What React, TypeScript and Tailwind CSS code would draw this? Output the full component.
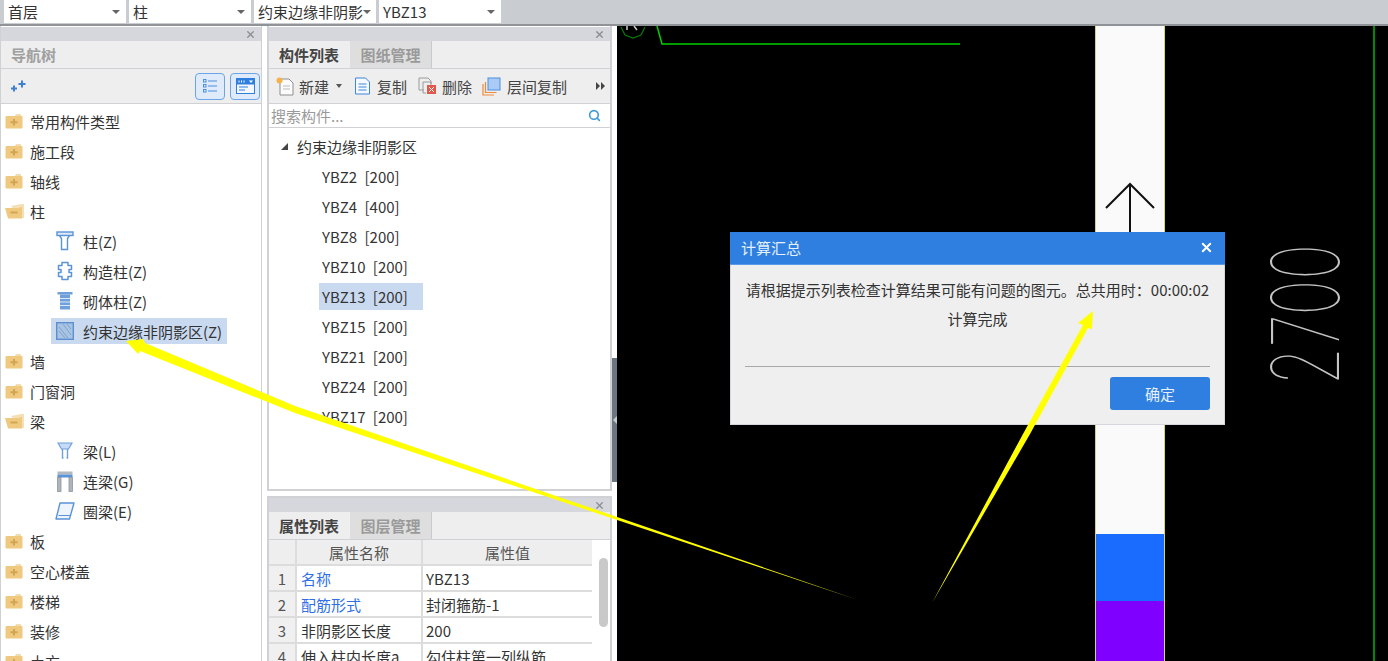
import { X, Search } from 'lucide-react';

const combos = ['首层', '柱', '约束边缘非阴影', 'YBZ13'];

const FolderClosed = () => (
  <svg width="18" height="16" viewBox="0 0 18 16" className="shrink-0">
    <path d="M1 3h9l1-2h5v2z" fill="#f3dcae" />
    <rect x="0.5" y="3" width="17" height="12.500" rx="1" fill="#efc97f" />
    <path d="M9 6v6.500M5.500 9.250h7" stroke="#d2a552" strokeWidth="2" />
  </svg>
);

const FolderOpen = () => (
  <svg width="20" height="16" viewBox="0 0 20 16" className="shrink-0">
    <path d="M6 3l10-2 3 0v14h-3z" fill="#f5e0b5" />
    <path d="M0 5h13l4-1v11.500H3z" fill="#efc97f" />
    <path d="M5.500 9.500h7" stroke="#d2a552" strokeWidth="2" />
  </svg>
);

const ColumnIcon = () => (
  <svg width="18" height="20" viewBox="0 0 18 20" fill="none" stroke="#5b93d8" strokeWidth="1.4">
    <rect x="1" y="1" width="16" height="3.5" fill="#dbe8f8" />
    <path d="M3.500 4.500 5.500 7.500v11h6v-11l2-3" />
  </svg>
);

const ConstructColumnIcon = () => (
  <svg width="18" height="20" viewBox="0 0 18 20" fill="none" stroke="#5b93d8" strokeWidth="1.5">
    <path d="M6 1.500h6v3h3.500v4H13v3h2.500v4H12v3H6v-3H2.500v-4H5v-3H2.500v-4H6z" strokeLinejoin="round" />
  </svg>
);

const MasonryIcon = () => (
  <svg width="16" height="20" viewBox="0 0 16 20">
    <rect x="0.500" y="1" width="15" height="2.500" fill="#6fa0dc" />
    <rect x="3" y="3.500" width="10" height="15" fill="#6fa0dc" />
    <path d="M3 7.500h10M3 11h10M3 14.500h10" stroke="#dbe8f8" strokeWidth="1" />
  </svg>
);

const HatchIcon = () => (
  <svg width="18" height="18" viewBox="0 0 18 18">
    <rect x="0.700" y="0.700" width="16.600" height="16.600" fill="#a9c3e3" stroke="#5b8fd0" strokeWidth="1.400" />
    <path d="M3 5l9 11M3 9l6 7M7 2l8 11M11 2l4 5" stroke="#7ea3d1" strokeWidth="1" />
  </svg>
);

const BeamIcon = () => (
  <svg width="16" height="18" viewBox="0 0 16 18" fill="none">
    <path d="M1 1h14l-3.500 6H4.500z" fill="#c6dbf5" stroke="#6fa0dc" strokeWidth="1.200" />
    <path d="M5.500 7v9h1M10.500 7v9h-1" stroke="#6fa0dc" strokeWidth="1.400" />
  </svg>
);

const LinkBeamIcon = () => (
  <svg width="16" height="21" viewBox="0 0 16 21" fill="none">
    <rect x="0.500" y="0.500" width="15" height="3" fill="#b4b9bf" />
    <rect x="0.500" y="3.500" width="15" height="3" fill="#5b93d8" />
    <rect x="0.500" y="6.500" width="3.500" height="14" fill="#aeb4ba" stroke="#8e959c" strokeWidth="0.800" />
    <rect x="12" y="6.500" width="3.500" height="14" fill="#aeb4ba" stroke="#8e959c" strokeWidth="0.800" />
  </svg>
);

const RingBeamIcon = () => (
  <svg width="20" height="18" viewBox="0 0 20 18" fill="none">
    <path d="M5 1h14l-4.500 16H1z" fill="#eef4fc" stroke="#5b93d8" strokeWidth="1.400" strokeLinejoin="round" />
    <path d="M3.500 13.500h12" stroke="#5b93d8" strokeWidth="1" />
  </svg>
);

const tree = [
  { label: '常用构件类型' },
  { label: '施工段' },
  { label: '轴线' },
  { label: '柱', open: true },
  { label: '柱(Z)', icon: <ColumnIcon /> },
  { label: '构造柱(Z)', icon: <ConstructColumnIcon /> },
  { label: '砌体柱(Z)', icon: <MasonryIcon /> },
  { label: '约束边缘非阴影区(Z)', icon: <HatchIcon />, selected: true },
  { label: '墙' },
  { label: '门窗洞' },
  { label: '梁', open: true },
  { label: '梁(L)', icon: <BeamIcon /> },
  { label: '连梁(G)', icon: <LinkBeamIcon /> },
  { label: '圈梁(E)', icon: <RingBeamIcon /> },
  { label: '板' },
  { label: '空心楼盖' },
  { label: '楼梯' },
  { label: '装修' },
  { label: '土方' },
];

const parts = ['YBZ2 [200]', 'YBZ4 [400]', 'YBZ8 [200]', 'YBZ10 [200]', 'YBZ13 [200]', 'YBZ15 [200]', 'YBZ21 [200]', 'YBZ24 [200]', 'YBZ17 [200]'];

const props = [
  { name: '名称', value: 'YBZ13', link: true },
  { name: '配筋形式', value: '封闭箍筋-1', link: true },
  { name: '非阴影区长度', value: '200' },
  { name: '伸入柱内长度a', value: '勾住柱第一列纵筋' },
];

function TitleStrip() {
  return (
    <div className="h-[14px] shrink-0 bg-[#d5d7dc] flex items-center justify-end pr-[5px]">
      <X size={11} strokeWidth={3} className="text-[#8b8f94]" />
    </div>
  );
}

function Tabs({ active, other }: { active: string; other: string }) {
  return (
    <div className="h-[28px] shrink-0 flex bg-[#eeeeee] border-b border-[#cfd1d4]">
      <div className="w-[80px] flex items-center justify-center font-bold text-[#444]">{active}</div>
      <div className="w-[82px] ml-px flex items-center justify-center bg-[#dedede] text-[#9a9a9a] font-bold border-r border-[#c8cacc]">{other}</div>
    </div>
  );
}

export default function App() {
  return (
    <div className="relative w-[1388px] h-[661px] overflow-hidden flex flex-col bg-white text-[15px] leading-none text-[#333] font-['Noto_Sans_CJK_SC','Liberation_Sans',sans-serif]">
      {/* combos */}
      <div className="h-[26px] shrink-0 bg-[#c9ccd1] border-b-2 border-[#8f9397] flex pl-[4px] gap-[3px]">
        {combos.map((c) => (
          <div key={c} className="w-[122px] h-[23px] bg-white flex items-center justify-between pl-[4px] pr-[6px] whitespace-nowrap overflow-hidden">
            <span>{c}</span>
            <span className="w-0 h-0 border-x-[4px] border-x-transparent border-t-[4px] border-t-[#666] shrink-0" />
          </div>
        ))}
      </div>

      <div className="flex-1 flex min-h-0">
        {/* nav tree */}
        <div className="w-[262px] shrink-0 border-x border-[#cfd1d4] flex flex-col pt-px overflow-hidden">
          <TitleStrip />
          <div className="h-[28px] shrink-0 bg-[#eeeeee] border-b border-[#cfd1d4] flex items-center pl-[10px] text-[#a0a0a0] font-bold">导航树</div>
          <div className="h-[35px] shrink-0 bg-[#eeeeee] border-b border-[#cfd1d4] flex items-center pl-[9px] pr-[1px]">
            <svg width="16" height="12" viewBox="0 0 16 12" fill="#3f7fd0">
              <path d="M3 5.500h2v2h2v2H5v2H3v-2H1v-2h2zM11 .5h2v2.500h2.500v2H13v2.500h-2V5H8.500V3H11z" />
            </svg>
            <div className="ml-auto flex gap-[5px]">
              <div className="w-[30px] h-[27px] rounded-[4px] bg-[#dfeafa] border border-[#6aa5ea] flex items-center justify-center">
                <svg width="16" height="16" viewBox="0 0 16 16" fill="none" stroke="#4a8fe0">
                  <rect x="1.500" y="1.500" width="2.500" height="2.500" />
                  <rect x="1.500" y="6.500" width="2.500" height="2.500" />
                  <rect x="1.500" y="11.500" width="2.500" height="2.500" />
                  <path d="M6 3h9M6 8h9M6 13h9" />
                </svg>
              </div>
              <div className="w-[30px] h-[27px] rounded-[4px] bg-[#dfeafa] border border-[#6aa5ea] flex items-center justify-center">
                <svg width="19" height="16" viewBox="0 0 19 16">
                  <rect x="0.500" y="0.500" width="18" height="15" fill="#f4f8fe" stroke="#2f7fe0" />
                  <rect x="0.500" y="0.500" width="18" height="6" fill="#2f7fe0" />
                  <path d="M3 2.500v2M5.500 2.500v2M8 2.500v2" stroke="#fff" />
                  <path d="M13 2.500h4l-2 2.500z" fill="#fff" />
                  <path d="M3 9h9M3 12h6" stroke="#2f7fe0" />
                </svg>
              </div>
            </div>
          </div>
          <div className="flex-1 bg-white pt-[2px]">
            {tree.map((t) => (
              <div key={t.label} className="h-[30px] flex items-center">
                {t.icon ? (
                  <div className={`ml-[50px] h-[26px] flex items-center pl-[4px] pr-[5px] ${t.selected ? 'bg-[#c8d9f0]' : ''}`}>
                    <span className="w-[20px] flex justify-center shrink-0">{t.icon}</span>
                    <span className="ml-[8px] whitespace-nowrap">{t.label}</span>
                  </div>
                ) : (
                  <div className="pl-[4px] flex items-center">
                    <span className="w-[20px] flex">{t.open ? <FolderOpen /> : <FolderClosed />}</span>
                    <span className="ml-[5px]">{t.label}</span>
                  </div>
                )}
              </div>
            ))}
          </div>
        </div>

        {/* middle panels */}
        <div className="w-[355px] shrink-0 pl-[5px] bg-white flex">
          <div className="w-[345px] flex flex-col">
            <div className="h-[465px] shrink-0 border-x-2 border-b-2 border-[#cfd1d4] flex flex-col pt-px">
              <TitleStrip />
              <Tabs active="构件列表" other="图纸管理" />
              <div className="h-[35px] shrink-0 bg-[#eeeeee] border-b border-[#cfd1d4] flex items-center pl-[7px] text-[#444] relative">
                <svg width="19" height="19" viewBox="0 0 19 19" fill="none" className="shrink-0">
                  <path d="M4 2h9l4 4v12H4z" fill="#fbfbfb" stroke="#8e8e8e" />
                  <path d="M7 9h7M7 12h7" stroke="#bbb" />
                  <circle cx="3.500" cy="3.500" r="3" fill="#f6b24a" />
                </svg>
                <span className="ml-[4px]">新建</span>
                <span className="ml-[7px] w-0 h-0 border-x-[3px] border-x-transparent border-t-[4px] border-t-[#555]" />
                <svg width="17" height="18" viewBox="0 0 17 18" fill="none" className="ml-[12px] shrink-0">
                  <path d="M1.500 1h10l4 4v12h-14z" fill="#f4f9ff" stroke="#3f85d8" />
                  <path d="M4.500 7h8M4.500 10h8M4.500 13h8" stroke="#3f85d8" />
                </svg>
                <span className="ml-[6px]">复制</span>
                <svg width="20" height="18" viewBox="0 0 20 18" fill="none" className="ml-[11px] shrink-0">
                  <path d="M1 1h9l3 3v3M1 1v12h5" stroke="#9a9a9a" />
                  <path d="M5 5h8v3M5 5v11h3" stroke="#9a9a9a" />
                  <rect x="9" y="8" width="9" height="9" fill="#e2574c" />
                  <path d="M11 10l5 5M16 10l-5 5" stroke="#fff" />
                </svg>
                <span className="ml-[4px]">删除</span>
                <svg width="19" height="19" viewBox="0 0 19 19" fill="none" className="ml-[10px] shrink-0">
                  <path d="M1 7v11h11M3.500 5v10.500h11" stroke="#f08a3c" strokeWidth="1.200" />
                  <rect x="6" y="1" width="12" height="12" fill="#a9cbf5" stroke="#4a8fe0" />
                </svg>
                <span className="ml-[6px]">层间复制</span>
                <span className="absolute right-[5px] top-[13px] flex">
                  <span className="w-0 h-0 border-y-[4px] border-y-transparent border-l-[4px] border-l-[#444]" />
                  <span className="ml-px w-0 h-0 border-y-[4px] border-y-transparent border-l-[4px] border-l-[#444]" />
                </span>
              </div>
              <div className="h-[24px] shrink-0 border-b border-[#cfd1d4] flex items-center pl-[2px] pr-[9px] text-[#9a9a9a]">
                <span>搜索构件...</span>
                <Search size={13} strokeWidth={3} className="ml-auto text-[#3d9ad6]" />
              </div>
              <div className="flex-1 pt-[3px]">
                <div className="h-[30px] flex items-center pl-[12px]">
                  <span className="w-0 h-0 border-l-[7px] border-l-transparent border-b-[7px] border-b-[#444]" />
                  <span className="ml-[9px]">约束边缘非阴影区</span>
                </div>
                {parts.map((p) => (
                  <div key={p} className="h-[30px] flex items-center pl-[50px]">
                    <span className={`h-[27px] flex items-center px-[3px] w-[104px] [word-spacing:4px] ${p === 'YBZ13 [200]' ? 'bg-[#c8d9f0]' : ''}`}>{p}</span>
                  </div>
                ))}
              </div>
            </div>

            <div className="mt-[5px] flex-1 border-x-2 border-t-2 border-[#cfd1d4] flex flex-col min-h-0 overflow-hidden">
              <TitleStrip />
              <Tabs active="属性列表" other="图层管理" />
              <div className="flex-1 flex min-h-0">
                <div className="flex-1">
                  <div className="grid grid-cols-[28px_126px_169px] auto-rows-[26px]">
                    <div className="bg-[#eeeeee] border-r-2 border-b-2 border-[#dcdcdc]" />
                    <div className="bg-[#eeeeee] border-r-2 border-b-2 border-[#dcdcdc] flex items-center justify-center text-[#555]">属性名称</div>
                    <div className="bg-[#eeeeee] border-b-2 border-[#dcdcdc] flex items-center justify-center text-[#555]">属性值</div>
                    {props.map((r, i) => (
                      <div key={r.name} className="contents">
                        <div className="bg-[#f0f0f0] border-r-2 border-b-2 border-[#dcdcdc] flex items-center justify-center text-[#555]">{i + 1}</div>
                        <div className={`border-r-2 border-b-2 border-[#dcdcdc] flex items-center pl-[4px] whitespace-nowrap ${r.link ? 'text-[#2f6fe8]' : ''}`}>{r.name}</div>
                        <div className="border-b-2 border-[#dcdcdc] flex items-center pl-[3px] whitespace-nowrap">{r.value}</div>
                      </div>
                    ))}
                  </div>
                </div>
                <div className="w-[19px] shrink-0 pt-[18px] pl-[7px]">
                  <div className="w-[9px] h-[69px] rounded-full bg-[#c9c9c9]" />
                </div>
              </div>
            </div>
          </div>
          {/* splitter */}
          <div className="w-[5px]">
            <div className="w-[5px] h-[124px] mt-[332px] bg-[#6b7680] flex items-center justify-center">
              <span className="w-0 h-0 border-y-[4px] border-y-transparent border-r-[4px] border-r-[#c5c8cc]" />
            </div>
          </div>
        </div>

        {/* cad canvas */}
        <div className="relative flex-1 bg-black overflow-hidden">
          <div className="absolute left-[478px] top-0 bottom-0 w-[70px] bg-[#fafafa] border-x border-[#d8d860] flex flex-col justify-end">
            <div className="h-[67px] bg-[#1a6cff]" />
            <div className="h-[60px] bg-[#8000ff]" />
          </div>
          <div className="absolute left-[756px] top-0 bottom-0 w-[2px] bg-[#008a00]" />
          <svg width="771" height="635" viewBox="617 26 771 635" fill="none" className="absolute left-0 top-0">
            <path d="M657 26l5 18h298" stroke="#00d000" strokeWidth="1.500" />
            <path d="M621 27l4 8 8 3 8-3 4-8" stroke="#0a7a0a" strokeWidth="1.200" />
            <path d="M627 26v4M634 26l3 4" stroke="#cccccc" strokeWidth="1.500" />
            <path d="M1130 232V185M1106 208l24-24 24 24" stroke="#111" strokeWidth="2" />
          </svg>
          <div className="absolute left-[689px] top-[288px] w-0 h-0 flex items-center justify-center whitespace-nowrap">
            <span className="text-[#c4c4c4] text-[93px] leading-none font-['Inter',sans-serif] font-thin -rotate-90 scale-x-[0.65]">2700</span>
          </div>
        </div>
      </div>

      {/* dialog */}
      <div className="absolute left-[730px] top-[232px] w-[495px] h-[193px] bg-[#efefef] border border-[#d5d7dc] border-t-0 flex flex-col">
        <div className="h-[33px] shrink-0 -mx-px bg-[#2e7fe0] border-b border-[#5a9ae8] flex items-center pl-[11px] pr-[11px] pb-px text-[#e6f0fc]">
          <span>计算汇总</span>
          <X size={15} strokeWidth={3} className="ml-auto text-white" />
        </div>
        <div className="px-[14px] flex-1 flex flex-col">
          <div className="mt-[17px] text-center whitespace-nowrap">请根据提示列表检查计算结果可能有问题的图元。总共用时：00:00:02</div>
          <div className="mt-[14px] text-center">计算完成</div>
          <div className="mt-[40px] border-t border-[#a8a8a8]" />
          <div className="mt-[10px] flex justify-end">
            <button className="w-[100px] h-[33px] rounded-[3px] bg-[#2e7fe0] text-[#e6f0fc] text-[15px]">确定</button>
          </div>
        </div>
      </div>

      {/* annotation arrows */}
      <svg width="1388" height="661" className="absolute left-0 top-0 pointer-events-none">
        <polygon points="126,341 143,339 145,343 295,406 858,600 295,413 140,351 138,354" fill="#ffff00" />
        <polygon points="1093,311 1078,323 1083,325 1023,434 932,603 1030,434 1088,328 1092,329" fill="#ffff00" />
      </svg>
    </div>
  );
}
